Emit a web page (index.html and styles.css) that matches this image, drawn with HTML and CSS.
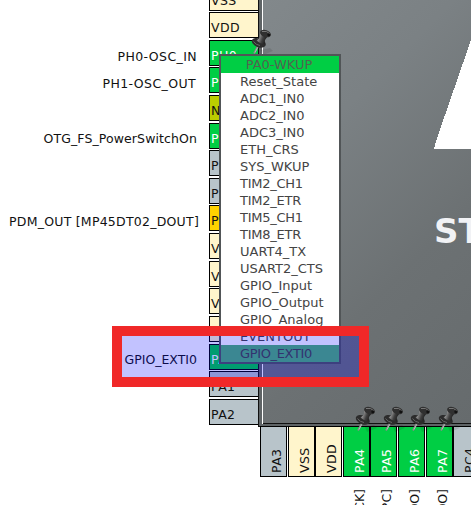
FILE: index.html
```
<!DOCTYPE html>
<html lang="en">
<head>
<meta charset="utf-8">
<title>Pinout view</title>
<link rel="stylesheet" href="styles.css">
</head>
<body>
<svg class="defs" width="0" height="0" aria-hidden="true">
  <defs>
    <linearGradient id="metal" x1="0" y1="0" x2="1" y2=".4">
      <stop offset="0" stop-color="#292929"/><stop offset=".35" stop-color="#8a8a8a"/><stop offset=".65" stop-color="#404040"/><stop offset="1" stop-color="#1b1b1b"/>
    </linearGradient>
    <symbol id="tack" viewBox="0 0 24 30">
      <path d="M10 22 L19 20 L22 23 L12 27Z" fill="#000" opacity=".1"/>
      <path d="M7.5 17 L3 25.5" stroke="#888" stroke-width="1.8"/>
      <path d="M7.5 18 L4 24.5" stroke="#ccc" stroke-width=".7"/>
      <ellipse cx="7.8" cy="14.8" rx="7.3" ry="4.4" transform="rotate(22 7.8 14.8)" fill="#2c2c2c"/>
      <path d="M9 5 L16.5 8.5 L14 12 L13.5 16.5 Q9 16 5.5 12.5 L9 9.5Z" fill="url(#metal)"/>
      <ellipse cx="14.5" cy="5.6" rx="5.6" ry="3.5" transform="rotate(18 14.5 5.6)" fill="#303030"/>
      <path d="M11 3.5 Q16 2.2 19 6" stroke="#777" fill="none"/>
      <path d="M2.5 13.5 Q5 17 9 17.5" stroke="#666" fill="none"/>
      <circle cx="17.8" cy="6.7" r="1.5" fill="#111"/>
    </symbol>
  </defs>
</svg>
<main class="pinout">
  <section class="side">
    <div class="row"><span class="label"></span><span class="pin power">VSS</span></div>
    <div class="row"><span class="label"></span><span class="pin power">VDD</span></div>
    <div class="row"><span class="label l-in">PH0-OSC_IN</span><span class="pin on">PH0</span></div>
    <div class="row"><span class="label l-out">PH1-OSC_OUT</span><span class="pin on">PH1</span></div>
    <div class="row"><span class="label"></span><span class="pin reset">NRST</span></div>
    <div class="row"><span class="label l-otg">OTG_FS_PowerSwitchOn</span><span class="pin on">PC0</span></div>
    <div class="row"><span class="label"></span><span class="pin">PC1</span></div>
    <div class="row"><span class="label"></span><span class="pin">PC2</span></div>
    <div class="row"><span class="label l-pdm">PDM_OUT [MP45DT02_DOUT]</span><span class="pin warn">PC3</span></div>
    <div class="row"><span class="label"></span><span class="pin power">VDD</span></div>
    <div class="row"><span class="label"></span><span class="pin power">VSSA</span></div>
    <div class="row"><span class="label"></span><span class="pin power">VREF</span></div>
    <div class="row"><span class="label"></span><span class="pin power">VDDA</span></div>
    <div class="row"><span class="label">GPIO_EXTI0</span><span class="pin on">PA0</span></div>
    <div class="row"><span class="label"></span><span class="pin">PA1</span></div>
    <div class="row"><span class="label"></span><span class="pin">PA2</span></div>
  </section>
  <section class="chip">
    <div class="face">
      <svg class="logo" width="38" height="112" viewBox="0 0 38 112" shape-rendering="crispEdges"><path d="M38 0V112H0Q1 109 2 104Z" fill="#fff"/></svg>
      <div class="name">STM32</div>
    </div>
  </section>
  <section class="bottom">
    <div class="col"><span class="pin">PA3</span></div>
    <div class="col"><span class="pin power">VSS</span></div>
    <div class="col"><span class="pin power">VDD</span></div>
    <div class="col"><span class="pin on">PA4</span><span class="foot">CK]</span></div>
    <div class="col"><span class="pin on">PA5</span><span class="foot">PC]</span></div>
    <div class="col"><span class="pin on">PA6</span><span class="foot">DO]</span></div>
    <div class="col"><span class="pin on">PA7</span><span class="foot">DO]</span></div>
    <div class="col"><span class="pin">PC4</span></div>
  </section>
</main>
<svg class="tack t0"><use href="#tack"/></svg>
<svg class="tack t1"><use href="#tack"/></svg>
<svg class="tack t2"><use href="#tack"/></svg>
<svg class="tack t3"><use href="#tack"/></svg>
<svg class="tack t4"><use href="#tack"/></svg>
<div class="menu">
  <div class="title">PA0-WKUP</div>
  <div class="item">Reset_State</div>
  <div class="item">ADC1_IN0</div>
  <div class="item">ADC2_IN0</div>
  <div class="item">ADC3_IN0</div>
  <div class="item">ETH_CRS</div>
  <div class="item">SYS_WKUP</div>
  <div class="item tight">TIM2_CH1</div>
  <div class="item tight">TIM2_ETR</div>
  <div class="item tight">TIM5_CH1</div>
  <div class="item tight">TIM8_ETR</div>
  <div class="item">UART4_TX</div>
  <div class="item">USART2_CTS</div>
  <div class="item">GPIO_Input</div>
  <div class="item">GPIO_Output</div>
  <div class="item">GPIO_Analog</div>
  <div class="item">EVENTOUT</div>
  <div class="item selected">GPIO_EXTI0</div>
</div>
<div class="marker"></div>
</body>
</html>
```
FILE: styles.css
```
* { box-sizing: border-box; }
body {
  margin: 0;
  width: 471px;
  height: 505px;
  overflow: hidden;
  position: relative;
  background: #fff;
  color: #111;
  font: 12.5px/14px "DejaVu Sans", sans-serif;
}
.defs { position: absolute; }
.pinout {
  display: grid;
  grid-template-columns: 258px 213px;
  grid-template-rows: 427px 78px;
  height: 505px;
  overflow: hidden;
}
.side { grid-row: 1 / 3; margin-top: -15.4px; }
.row { display: flex; height: 27.62px; }
.label {
  width: 209px;
  flex: none;
  padding: 9px 12px 0 0;
  text-align: right;
  white-space: nowrap;
}
.l-in, .l-out { letter-spacing: .4px; padding-top: 10px; }
.l-out { padding-right: 13px; }
.l-otg { letter-spacing: .1px; }
.l-pdm { letter-spacing: .24px; padding: 10px 10px 0 0; }
.pin {
  width: 51px;
  height: 26px;
  flex: none;
  border: 1px solid #000;
  background: #b8c4ca;
  padding: 8px 0 0 1px;
  letter-spacing: .4px;
  overflow: hidden;
}
.power { background: #fff5cc; }
.on { background: #00ce44; color: #fff; }
.reset { background: #bccd00; }
.warn { background: #ffd200; }
.chip {
  position: relative;
  border: solid #111;
  border-width: 0 0 1px 1px;
  padding: 0 0 2px 3px;
  background: #5f6466;
}
.face {
  height: 424px;
  border: solid #fff;
  border-width: 0 0 0 1px;
  box-shadow: inset 0 -1px #111;
  background: linear-gradient(135deg, #82888b 0%, #7b8184 30%, #6c7173 65%, #666b6d 100%);
  padding-top: 37px;
  overflow: hidden;
}
.logo { display: block; margin-left: 171px; }
.name {
  margin: 63px 0 0 171px;
  font-weight: bold;
  font-size: 34px;
  line-height: 38px;
  color: #f1f2f5;
}
.bottom { display: flex; padding-left: 2px; }
.col {
  width: 27.62px;
  flex: none;
  display: flex;
  flex-direction: column;
}
.bottom .pin {
  width: 27px;
  height: 51px;
  margin-top: -1px;
  writing-mode: vertical-rl;
  transform: rotate(180deg);
  padding: 3px 8px 0 0;
  line-height: 15px;
}
.foot {
  writing-mode: vertical-rl;
  transform: rotate(180deg);
  margin: 12px 0 0 9px;
  width: 15px;
  line-height: 15px;
}
.tack { position: absolute; width: 24px; height: 30px; }
.t0 { left: 251px; top: 28px; }
.t1 { left: 355px; top: 405px; }
.t2 { left: 383px; top: 405px; }
.t3 { left: 410px; top: 405px; }
.t4 { left: 438px; top: 405px; }
.menu {
  position: absolute;
  left: 219px;
  top: 54px;
  width: 122px;
  height: 310px;
  border: 2px solid #515557;
  background: #fff;
  color: #444;
  font-size: 13px;
  line-height: 17px;
}
.title { height: 17px; background: #00ce44; padding-right: 2px; text-align: center; color: #526350; }
.item { height: 17px; padding-left: 19px; white-space: nowrap; }
.tight { letter-spacing: -.25px; }
.selected { background: #4eb270; letter-spacing: -.35px; }
.marker {
  position: absolute;
  left: 112px;
  top: 326px;
  width: 257px;
  height: 61px;
  border: 10px solid #f02828;
  background: rgba(0, 0, 255, .24);
}
```
